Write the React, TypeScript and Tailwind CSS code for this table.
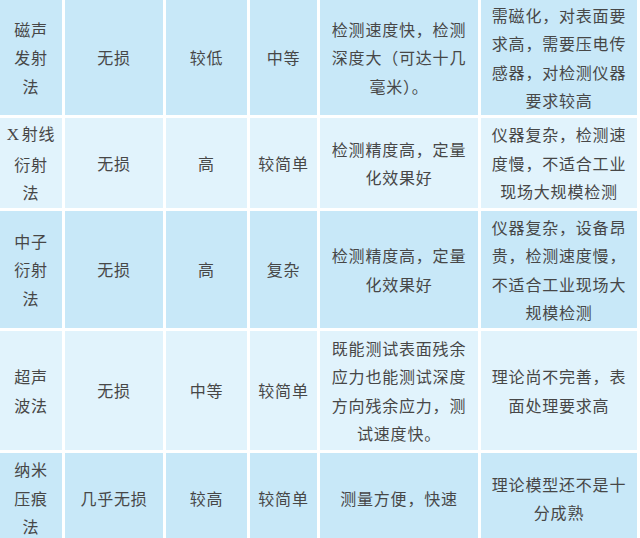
const rows: string[][][] = [
  [
    ["磁声", "发射", "法"],
    ["无损"],
    ["较低"],
    ["中等"],
    ["检测速度快，检测", "深度大（可达十几", "毫米）。"],
    ["需磁化，对表面要", "求高，需要压电传", "感器，对检测仪器", "要求较高"],
  ],
  [
    ["X射线", "衍射", "法"],
    ["无损"],
    ["高"],
    ["较简单"],
    ["检测精度高，定量", "化效果好"],
    ["仪器复杂，检测速", "度慢，不适合工业", "现场大规模检测"],
  ],
  [
    ["中子", "衍射", "法"],
    ["无损"],
    ["高"],
    ["复杂"],
    ["检测精度高，定量", "化效果好"],
    ["仪器复杂，设备昂", "贵，检测速度慢，", "不适合工业现场大", "规模检测"],
  ],
  [
    ["超声", "波法"],
    ["无损"],
    ["中等"],
    ["较简单"],
    ["既能测试表面残余", "应力也能测试深度", "方向残余应力，测", "试速度快。"],
    ["理论尚不完善，表", "面处理要求高"],
  ],
  [
    ["纳米", "压痕", "法"],
    ["几乎无损"],
    ["较高"],
    ["较简单"],
    ["测量方便，快速"],
    ["理论模型还不是十", "分成熟"],
  ],
];

function Line({ text }: { text: string }) {
  if (text.startsWith("X")) {
    return (
      <div>
        <span className="font-['Liberation_Serif',serif] text-[17px] mr-[2px]">X</span>
        {text.slice(1)}
      </div>
    );
  }
  return <div>{text}</div>;
}

export default function App() {
  return (
    <div className="w-[640px] h-[538px] overflow-hidden bg-white">
      <div
        className="grid grid-cols-[62px_98px_81px_67px_158px_156px] grid-rows-[115px_90px_117px_119px_90px] gap-[3px] font-['Noto_Sans_CJK_SC','Noto_Sans',sans-serif] text-[16px] leading-[28.5px] tracking-[0.8px] text-[#474747]"
      >
        {rows.map((row, ri) =>
          row.map((cell, ci) => (
            <div
              key={`${ri}-${ci}`}
              className={`flex flex-col items-center justify-center text-center whitespace-nowrap ${
                ri % 2 === 0 ? "bg-[#c8e8f8]" : "bg-[#e1f3fc]"
              }`}
            >
              {cell.map((t, i) => (
                <Line key={i} text={t} />
              ))}
            </div>
          ))
        )}
      </div>
    </div>
  );
}
